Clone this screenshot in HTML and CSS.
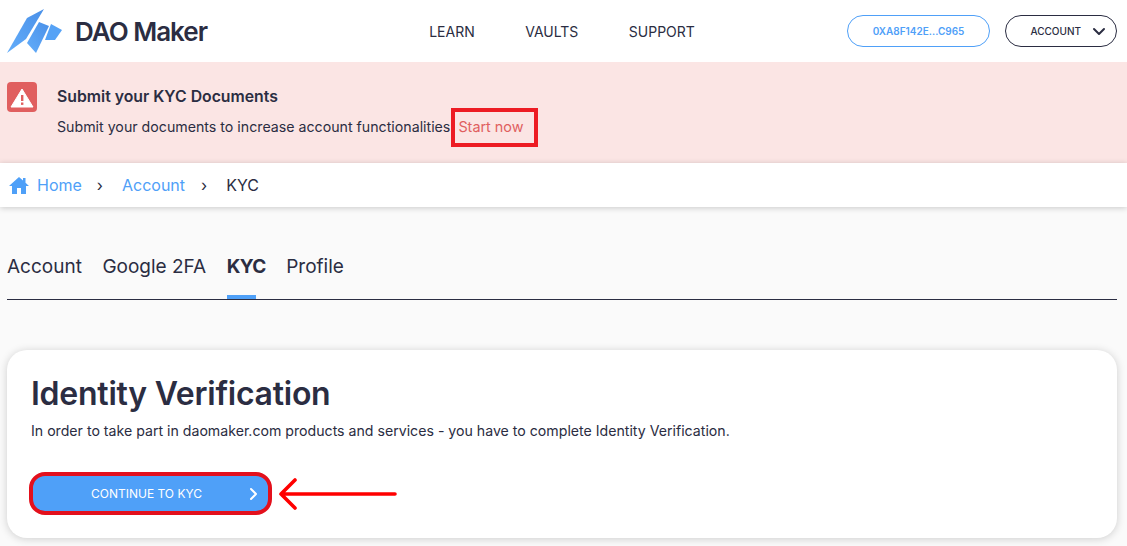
FILE: index.html
```html
<!DOCTYPE html>
<html lang="en">
<head>
    <meta charset="UTF-8">
    <title>DAO Maker - KYC</title>
    <link rel="stylesheet" href="styles.css">
</head>
<body>
    <header class="topbar">
        <a class="logo">
            <svg class="logo-mark" width="56" height="46" viewBox="0 0 56 46">
                <defs>
                    <linearGradient id="logoFill" x1="0" y1="1" x2="1" y2="0">
                        <stop offset="0" stop-color="#63adfa"/>
                        <stop offset="1" stop-color="#4a90e8"/>
                    </linearGradient>
                </defs>
                <path d="M0 45 L20 10 L37 1 L19 31 Z" fill="url(#logoFill)"/>
                <path d="M20 35 L29 45 L42 18 L32 14 Z" fill="url(#logoFill)"/>
                <path d="M38 32 L44 16 L55 22 L48 32 Z" fill="#55a2f6"/>
            </svg>
            <span class="logo-text">DAO Maker</span>
        </a>
        <nav class="nav">
            <a>LEARN</a>
            <a>VAULTS</a>
            <a>SUPPORT</a>
        </nav>
        <div class="actions">
            <button class="wallet">0XA8F142E...C965</button>
            <button class="account">
                <span>ACCOUNT</span>
                <svg width="14" height="9" viewBox="0 0 14 9"><path d="M2 2 L7 7 L12 2" fill="none" stroke="#2b2d42" stroke-width="2" stroke-linecap="round" stroke-linejoin="round"/></svg>
            </button>
        </div>
    </header>

    <section class="alert">
        <svg class="alert-icon" width="30" height="30" viewBox="0 0 30 30">
            <rect width="30" height="30" rx="4" fill="#e05f5f"/>
            <path d="M15 7 L26 25 L4 25 Z" fill="#fff" stroke="#fff" stroke-linejoin="round"/>
            <rect x="14" y="13" width="2.4" height="6" fill="#e05f5f"/>
            <rect x="14" y="20.5" width="2.4" height="2.4" fill="#e05f5f"/>
        </svg>
        <div>
            <h4>Submit your KYC Documents</h4>
            <p>Submit your documents to increase account functionalities<a class="start-now">Start now</a></p>
        </div>
    </section>

    <div class="crumbs">
        <svg width="20" height="18" viewBox="0 0 20 18"><path d="M10 1 L14 4.6 L14 2 L16.5 2 L16.5 6.8 L20 10 L17 10 L17 18 L12 18 L12 12 L8 12 L8 18 L3 18 L3 10 L0 10 Z" fill="#4fa0f8"/></svg>
        <a class="crumb-home">Home</a>
        <span class="sep">›</span>
        <a>Account</a>
        <span class="sep sep-last">›</span>
        <span class="crumb-now">KYC</span>
    </div>

    <main class="content">
        <div class="tabs">
            <a>Account</a>
            <a>Google 2FA</a>
            <a class="active">KYC</a>
            <a>Profile</a>
        </div>

        <div class="card">
            <h1>Identity Verification</h1>
            <p>In order to take part in daomaker.com products and services - you have to complete Identity Verification.</p>
            <div class="cta-row">
                <button class="cta">
                    <span>CONTINUE TO KYC</span>
                    <svg width="10" height="14" viewBox="0 0 10 14"><path d="M2 2 L7 7 L2 12" fill="none" stroke="#fff" stroke-width="2" stroke-linecap="round" stroke-linejoin="round"/></svg>
                </button>
                <svg class="arrow" width="122" height="34" viewBox="0 0 122 34"><path d="M119 17 L5 17 M19 3 L5 17 L19 31" fill="none" stroke="#f00" stroke-width="3.6" stroke-linecap="round" stroke-linejoin="round"/></svg>
            </div>
        </div>
    </main>
</body>
</html>
```

FILE: styles.css
```css
* {
    box-sizing: border-box;
}
body {
    margin: 0;
    height: 546px;
    overflow: hidden;
    background-color: #fafafa;
    color: #2b2d42;
    font-family: Inter, "Liberation Sans", sans-serif;
}
.topbar {
    height: 62px;
    background-color: #fff;
    display: grid;
    grid-template-columns: 1fr auto 1fr;
    align-items: center;
    padding: 0 10px 0 7px;
}
.logo {
    display: flex;
    align-items: center;
    gap: 12px;
}
.logo-text {
    font-size: 26px;
    font-weight: 600;
    letter-spacing: -1px;
}
.nav {
    display: flex;
    gap: 50.5px;
    font-size: 14px;
}
.actions {
    display: flex;
    justify-content: flex-end;
    gap: 15px;
}
.wallet, .account {
    height: 32px;
    border-radius: 16px;
    background: #fff;
    font-family: inherit;
    font-size: 10px;
    font-weight: 600;
}
.wallet {
    width: 143px;
    border: 1px solid #4fa0f8;
    color: #4fa0f8;
}
.account {
    width: 112px;
    border: 1px solid #2b2d42;
    color: #2b2d42;
    display: flex;
    align-items: center;
    justify-content: flex-end;
    gap: 11px;
    padding-right: 10px;
    font-weight: 500;
}
.alert {
    height: 101px;
    background-color: #fbe5e4;
    display: flex;
    gap: 20px;
    padding: 20px 7px 0;
}
.alert h4 {
    margin: 5px 0 0;
    font-size: 15.8px;
    font-weight: 600;
    line-height: 20px;
}
.alert p {
    margin: 10px 0 0;
    font-size: 14.2px;
    line-height: 20px;
}
.start-now {
    display: inline-block;
    color: #e05f5f;
    border: 4px solid #ed1c24;
    margin: -10px 0 -10px 1px;
    padding: 5.5px 10px 5.5px 3px;
    font-size: 14.4px;
}
.crumbs {
    height: 44px;
    background-color: #fff;
    box-shadow: 0 1px 6px rgba(0, 0, 0, 0.2);
    display: flex;
    align-items: center;
    padding: 0 8px 0 9px;
    font-size: 16px;
    color: #4fa0f8;
    position: relative;
}
.crumb-home {
    margin-left: 8px;
}
.sep {
    color: #2b2d42;
    margin: 0 19px 0 15px;
}
.sep-last {
    margin: 0 19px 0 16px;
}
.crumb-now {
    color: #2b2d42;
}
.content {
    padding: 0 10px 0 7px;
}
.tabs {
    display: flex;
    gap: 20.5px;
    margin-top: 47px;
    height: 46px;
    border-bottom: 1px solid #2b2d42;
    font-size: 19px;
    padding-top: 1px;
}
.tabs a {
    height: 44px;
    display: flex;
    flex-direction: column;
}
.tabs .active {
    font-weight: 700;
    letter-spacing: -0.6px;
}
.tabs .active::after {
    content: "";
    margin-top: auto;
    width: 29px;
    height: 4px;
    background-color: #4fa0f8;
}
.card {
    margin-top: 50px;
    height: 188px;
    background-color: #fff;
    border-radius: 20px;
    box-shadow: 0 1px 8px rgba(0, 0, 0, 0.18);
    padding: 24px 24px 0;
}
.card h1 {
    margin: 0;
    font-size: 32px;
    font-weight: 600;
    letter-spacing: -0.25px;
    line-height: 40px;
}
.card p {
    margin: 7px 0 0;
    font-size: 14.15px;
    line-height: 20px;
}
.cta-row {
    display: flex;
    align-items: center;
    gap: 4px;
    margin: 31px 0 0 -2px;
}
.cta {
    width: 243px;
    height: 43px;
    border: 4px solid #e3101c;
    border-radius: 16px;
    background-color: #4fa0f8;
    color: #fff;
    font-family: inherit;
    font-size: 12px;
    display: flex;
    align-items: center;
    justify-content: flex-end;
    gap: 47px;
    padding-right: 9px;
}
```
